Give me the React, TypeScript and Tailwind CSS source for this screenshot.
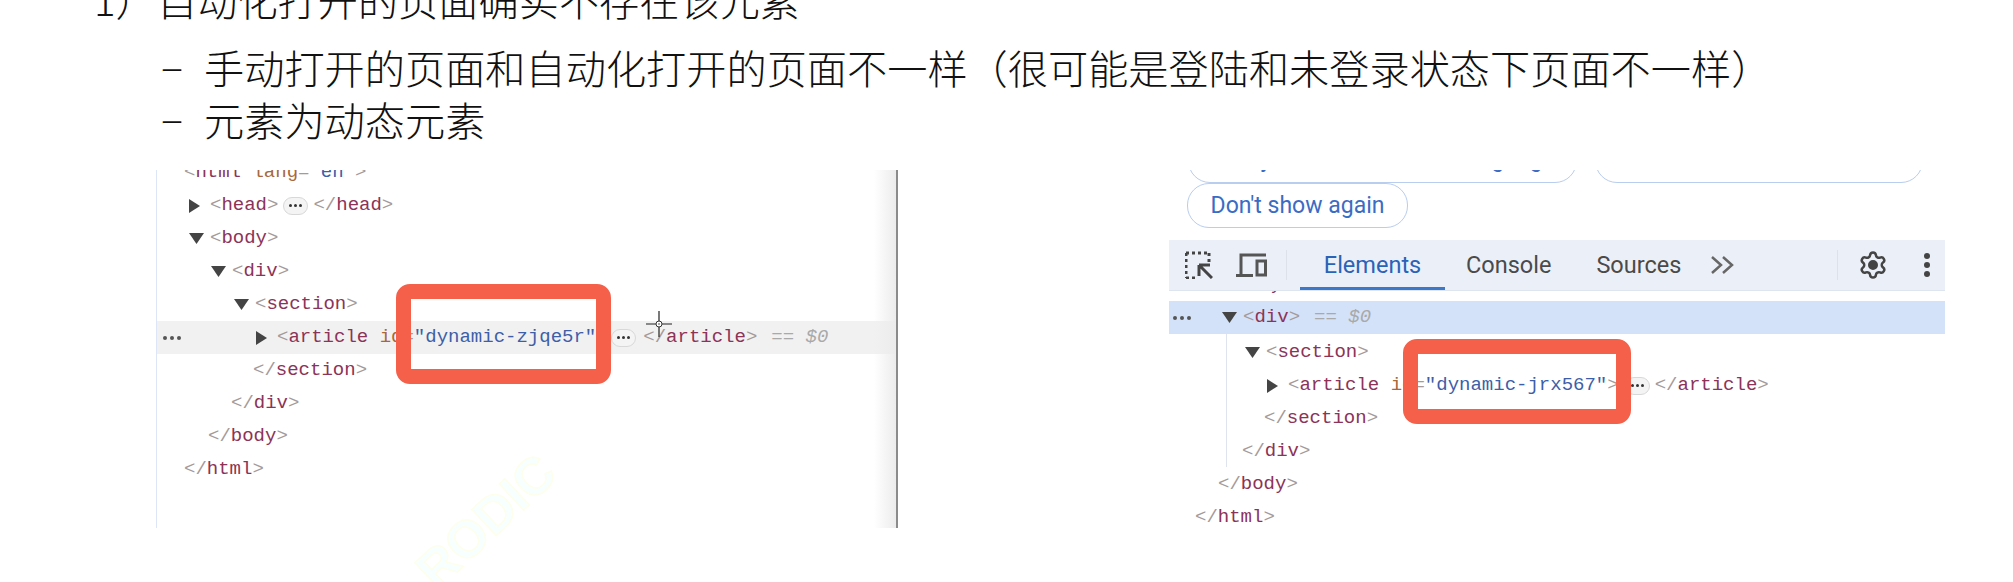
import type { ReactNode } from "react";
import { Settings } from "lucide-react";

const mono = "font-['Liberation_Mono','DejaVu_Sans_Mono',monospace] text-[19px]";

function Tag({ text, close }: { text: string; close?: boolean }) {
  return (
    <span>
      <span className="text-[#a49a9a]">{close ? "</" : "<"}</span>
      <span className="text-[#8c3358]">{text}</span>
      <span className="text-[#a49a9a]">{">"}</span>
    </span>
  );
}

function Arrow({ open }: { open?: boolean }) {
  return open ? (
    <svg width="15" height="11" viewBox="0 0 15 11" className="shrink-0">
      <path d="M0 0h15L7.5 11z" fill="#444" />
    </svg>
  ) : (
    <svg width="11" height="14" viewBox="0 0 11 14" className="shrink-0">
      <path d="M0 0l11 7-11 7z" fill="#444" />
    </svg>
  );
}

function Pill({ className = "" }: { className?: string }) {
  return (
    <span
      className={`flex h-[18px] w-[25px] shrink-0 items-center justify-center gap-[2px] rounded-[9px] border border-[#d8d8d8] bg-[#f4f4f4] ${className}`}
    >
      <i className="size-[3px] rounded-full bg-[#333]" />
      <i className="size-[3px] rounded-full bg-[#333]" />
      <i className="size-[3px] rounded-full bg-[#333]" />
    </span>
  );
}

function Dots({ className = "" }: { className?: string }) {
  return (
    <span className={`flex gap-[3px] ${className}`}>
      <i className="size-[4px] rounded-full bg-[#555]" />
      <i className="size-[4px] rounded-full bg-[#555]" />
      <i className="size-[4px] rounded-full bg-[#555]" />
    </span>
  );
}

function Row({
  indent,
  arrow,
  children,
  className = "",
}: {
  indent: number;
  arrow?: ReactNode;
  children: ReactNode;
  className?: string;
}) {
  return (
    <div className={`relative flex h-[33px] items-center whitespace-pre ${className}`} style={{ paddingLeft: indent }}>
      {arrow && <span className="absolute flex -translate-x-[21px] items-center">{arrow}</span>}
      {children}
    </div>
  );
}

function Zero() {
  return <span className="ml-[14px] italic text-[#a9a9a9]">== $0</span>;
}

function RedBox({ className }: { className: string }) {
  return <div className={`absolute rounded-[14px] border-[15px] border-[#f5604a] ${className}`} />;
}

function LeftPanel() {
  return (
    <div className={`relative ml-[156px] h-[358px] w-[742px] shrink-0 overflow-hidden border-l border-l-[#dce6f7] ${mono}`}>
      <div className="-mt-[14px]">
        <Row indent={27}>
          <span className="text-[#a49a9a]">{"<"}</span>
          <span className="text-[#8c3358]">html </span>
          <span className="text-[#a8683a]">lang</span>
          <span className="text-[#a49a9a]">="</span>
          <span className="text-[#3d5fa8]">en</span>
          <span className="text-[#a49a9a]">{'">'}</span>
        </Row>
        <Row indent={53} arrow={<Arrow />}>
          <Tag text="head" />
          <Pill className="mx-[5px]" />
          <Tag text="head" close />
        </Row>
        <Row indent={53} arrow={<Arrow open />}>
          <Tag text="body" />
        </Row>
        <Row indent={75} arrow={<Arrow open />}>
          <Tag text="div" />
        </Row>
        <Row indent={98} arrow={<Arrow open />}>
          <Tag text="section" />
        </Row>
        <Row indent={120} arrow={<Arrow />} className="bg-[#f1f1f1]">
          <Dots className="absolute left-[6px]" />
          <span className="text-[#a49a9a]">{"<"}</span>
          <span className="text-[#8c3358]">article </span>
          <span className="text-[#a8683a]">id</span>
          <span className="text-[#a49a9a]">=</span>
          <span className="text-[#3d5fa8]">"dynamic-zjqe5r"</span>
          <Pill className="ml-[15px] mr-[7px]" />
          <Tag text="article" close />
          <Zero />
        </Row>
        <Row indent={96}>
          <Tag text="section" close />
        </Row>
        <Row indent={74}>
          <Tag text="div" close />
        </Row>
        <Row indent={51}>
          <Tag text="body" close />
        </Row>
        <Row indent={27}>
          <Tag text="html" close />
        </Row>
      </div>
      <div className="absolute inset-y-0 right-0 w-[24px] border-r-2 border-r-[#8b8b8b] bg-gradient-to-r from-transparent to-[#ececec]" />
      <RedBox className="left-[239px] top-[114px] h-[100px] w-[215px]" />
      <svg width="26" height="26" viewBox="0 0 26 26" className="absolute left-[489px] top-[141px]">
        <path d="M13 0v10M13 16v10M0 13h10M16 13h10" stroke="#222" strokeWidth="1.2" />
        <circle cx="13" cy="13" r="3" fill="#fff" stroke="#333" />
        <circle cx="13" cy="13" r="0.8" fill="#333" />
      </svg>
    </div>
  );
}

function InspectIcon() {
  return (
    <svg width="28" height="28" viewBox="0 0 28 28" fill="none" stroke="#444">
      <path d="M1 2h23M1 2v25M24 2v9M1 27h9" strokeWidth="3" strokeDasharray="3 3" />
      <path d="M14 14h11M14 14v11M14.5 14.5L27 27" strokeWidth="3" />
    </svg>
  );
}

function DeviceIcon() {
  return (
    <svg width="31" height="24" viewBox="0 0 31 24" fill="none" stroke="#555" strokeWidth="3">
      <path d="M5 21V2h25M0 22.500h17" />
      <rect x="21" y="8" width="8.500" height="14" />
    </svg>
  );
}

function RightPanel() {
  return (
    <div className={`relative ml-[271px] h-[358px] w-[776px] shrink-0 overflow-hidden ${mono}`}>
      <div className="relative h-[70px] font-['Roboto',sans-serif] text-[23px] text-[#3b6cc4]">
        <div className="absolute -top-[32px] left-[19px] flex h-[45px] w-[389px] items-center justify-center rounded-[22px] border border-[#b9cdee]">
          Always match Chrome's language
        </div>
        <div className="absolute -top-[32px] left-[426px] flex h-[45px] w-[328px] items-center justify-center rounded-[22px] border border-[#b9cdee]">
          Switch DevTools to Chinese
        </div>
        <div className="absolute left-[18px] top-[13px] flex h-[45px] w-[221px] items-center justify-center rounded-[22px] border border-[#b9cdee] pt-[1px]">
          Don't show again
        </div>
      </div>
      <div className="flex h-[51px] items-stretch border-b border-b-[#dfe5ef] bg-[#ebf0f8] font-['Roboto',sans-serif] text-[23.500px] text-[#4a4a4a]">
        <div className="ml-[16px] flex items-center">
          <InspectIcon />
        </div>
        <div className="ml-[23px] flex items-center">
          <DeviceIcon />
        </div>
        <div className="my-[10px] ml-[19px] w-px bg-[#dde2ea]" />
        <div className="ml-[13px] flex w-[145px] items-center justify-center border-b-[3px] border-b-[#3b78c9] pt-[4px] text-[#2a62b8]">
          Elements
        </div>
        <div className="ml-[21px] flex items-center pt-[1px]">Console</div>
        <div className="ml-[45px] flex items-center pt-[1px]">Sources</div>
        <svg width="24" height="20" viewBox="0 0 24 20" fill="none" stroke="#666" strokeWidth="2.500" className="ml-[29px] self-center">
          <path d="M2 2l9 8-9 8M13 2l9 8-9 8" />
        </svg>
        <div className="my-[10px] ml-auto w-px bg-[#dde2ea]" />
        <div className="ml-[20px] flex items-center">
          <Settings size={30} strokeWidth={2} color="#444" className="[&_circle]:fill-[#444]" />
        </div>
        <div className="ml-[36px] mr-[15px] flex flex-col justify-center gap-[3px]">
          <i className="size-[6px] rounded-full bg-[#444]" />
          <i className="size-[6px] rounded-full bg-[#444]" />
          <i className="size-[6px] rounded-full bg-[#444]" />
        </div>
      </div>
      <div className="h-[10px] overflow-hidden">
        <div className="-mt-[23px]">
          <Row indent={56}>
            <Tag text="body" />
          </Row>
        </div>
      </div>
      <Row indent={74} arrow={<Arrow open />} className="bg-[#d3e2f8]">
        <Dots className="absolute left-[4px]" />
        <Tag text="div" />
        <Zero />
      </Row>
      <div className="mt-[2px]">
        <Row indent={97} arrow={<Arrow open />}>
          <Tag text="section" />
        </Row>
        <Row indent={119} arrow={<Arrow />}>
          <span className="text-[#a49a9a]">{"<"}</span>
          <span className="text-[#8c3358]">article </span>
          <span className="text-[#a8683a]">id</span>
          <span className="text-[#a49a9a]">=</span>
          <span className="text-[#3d5fa8]">"dynamic-jrx567"</span>
          <span className="text-[#a49a9a]">{">"}</span>
          <Pill className="ml-[6px] mr-[5px]" />
          <Tag text="article" close />
        </Row>
        <Row indent={95}>
          <Tag text="section" close />
        </Row>
        <Row indent={73}>
          <Tag text="div" close />
        </Row>
        <Row indent={49}>
          <Tag text="body" close />
        </Row>
        <Row indent={26}>
          <Tag text="html" close />
        </Row>
      </div>
      <div className="absolute left-[57px] top-[164px] h-[133px] w-px bg-[#dfe3f0]" />
      <RedBox className="left-[234px] top-[169px] h-[85px] w-[228px]" />
    </div>
  );
}

export default function App() {
  return (
    <div className="relative h-[582px] w-[2013px] overflow-hidden bg-white text-[#111]">
      <div className="font-['Noto_Sans_CJK_SC',sans-serif] text-[40.200px] font-light leading-[52px]">
        <div className="-mt-[27px] mb-[16px] flex pl-[94px]">
          <span className="w-[63px]">1）</span>
          <span>自动化打开的页面确实不存在该元素</span>
        </div>
        <div className="flex pl-[163px]">
          <span className="w-[41px] font-['Liberation_Serif',serif] text-[36px]">–</span>
          <span>手动打开的页面和自动化打开的页面不一样（很可能是登陆和未登录状态下页面不一样）</span>
        </div>
        <div className="flex pl-[163px]">
          <span className="w-[41px] font-['Liberation_Serif',serif] text-[36px]">–</span>
          <span>元素为动态元素</span>
        </div>
      </div>
      <div className="mt-[25px] flex">
        <LeftPanel />
        <RightPanel />
      </div>
      {/* watermark sits across the page, not inside the panel */}
      <div className="absolute left-[402px] top-[491px] -rotate-[43deg] font-['Liberation_Sans',sans-serif] text-[52px] font-bold leading-[60px] text-[#f7ffff] [-webkit-text-stroke:1.5px_#fefeec]">
        RODIC
      </div>
    </div>
  );
}
